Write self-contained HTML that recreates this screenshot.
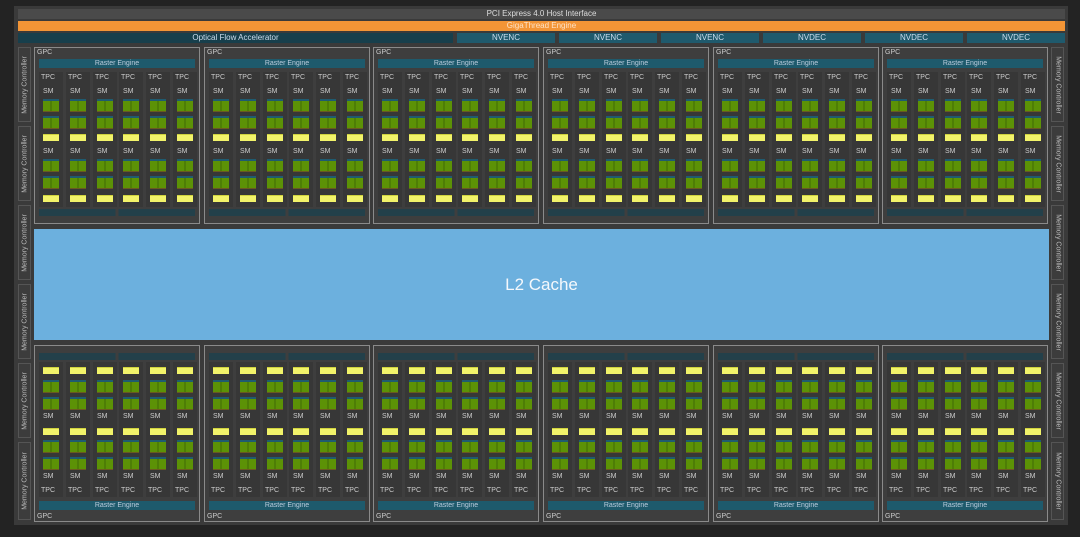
<!DOCTYPE html><html><head><meta charset="utf-8"><style>
*{margin:0;padding:0;box-sizing:border-box}
body{width:1080px;height:537px;background:#232323;position:relative;overflow:hidden;font-family:"Liberation Sans Narrow","Liberation Sans",sans-serif;color:#d8d8d8}
.a{position:absolute}
#panel{left:14px;top:6px;width:1054px;height:519px;background:#3a3a3a}
.bar{position:absolute;height:10px;font-size:8px;line-height:10px;text-align:center}
.mc{position:absolute;width:13px;height:75px;background:#3c3c3c;border:1px solid #555;font-size:7px;color:#bbb}
.mc span{position:absolute;left:50%;top:50%;white-space:nowrap;transform:translate(-50%,-50%) rotate(-90deg)}
.mc.r span{transform:translate(-50%,-50%) rotate(90deg)}
.g{position:absolute;width:166px;height:177px;background:#3e3e3e;border:1px solid #8a8a8a}
.g .lb{position:absolute;left:2px;font-size:7px;color:#ccc}
.g .re{position:absolute;left:4px;width:156px;height:9px;background:#1e5a6c;font-size:7px;line-height:9px;text-align:center;color:#bcd}
.g .bb{position:absolute;left:4px;width:156px;height:7px;background:linear-gradient(90deg,#23404a 0 49%,#3e3e3e 49% 51%,#23404a 51%)}
.top .lb{top:1px}.top .re{top:11px}.top .row{top:24px}.top .bb{top:161px}
.bot .lb{bottom:1px}.bot .re{bottom:11px}.bot .row{bottom:24px}.bot .bb{bottom:161px}
.row{position:absolute;left:0;width:164px;height:135px}
.t{position:absolute;width:24px;height:135px;background:#373737}
.t:nth-child(1){left:4px}.t:nth-child(2){left:31px}.t:nth-child(3){left:58px}.t:nth-child(4){left:84px}.t:nth-child(5){left:111px}.t:nth-child(6){left:138px}
.t p{position:absolute;left:2px;font-size:7px;line-height:8px;color:#ccc}
.t s{position:absolute;left:4px;width:16px;height:13px;background:linear-gradient(90deg,#5c9206 0 48%,#3f6a06 48% 54%,#5c9206 54%);border-top:2px solid #1f5b70;border-bottom:1px solid #6a5a20}
.t u{position:absolute;left:4px;width:16px;height:7px;background:#f2f36a;border-top:1px solid #cfd23e}
.top .l1{top:2px}.top .l2{top:16px;left:4px}.top .g1{top:27px}.top .g2{top:44px}.top .y1{top:62px}.top .l3{top:76px;left:4px}.top .g3{top:87px}.top .g4{top:104px}.top .y2{top:123px}
.bot .l1{bottom:2px}.bot .l2{bottom:16px;left:4px}.bot .g1{bottom:27px}.bot .g2{bottom:44px}.bot .y1{bottom:62px}.bot .l3{bottom:76px;left:4px}.bot .g3{bottom:87px}.bot .g4{bottom:104px}.bot .y2{bottom:123px}
#l2{left:34px;top:229px;width:1015px;height:111px;background:#6cb0de;font-family:"Liberation Sans",sans-serif;font-size:17px;color:#f4f8fc;text-align:center;line-height:111px}
</style></head><body>
<div id="panel" class="a"></div>
<div class="bar" style="left:18px;top:9px;width:1047px;background:#4a4a4a;color:#ddd">PCI Express 4.0 Host Interface</div>
<div class="bar" style="left:18px;top:21px;width:1047px;background:#f39536;color:#fde3c8">GigaThread Engine</div>
<div class="bar" style="left:18px;top:33px;width:435px;background:#173f4c;color:#cde">Optical Flow Accelerator</div>
<div class="bar" style="left:457px;top:33px;width:98px;background:#1f5a6d;color:#cde">NVENC</div>
<div class="bar" style="left:559px;top:33px;width:98px;background:#1f5a6d;color:#cde">NVENC</div>
<div class="bar" style="left:661px;top:33px;width:98px;background:#1f5a6d;color:#cde">NVENC</div>
<div class="bar" style="left:763px;top:33px;width:98px;background:#1f5a6d;color:#cde">NVDEC</div>
<div class="bar" style="left:865px;top:33px;width:98px;background:#1f5a6d;color:#cde">NVDEC</div>
<div class="bar" style="left:967px;top:33px;width:98px;background:#1f5a6d;color:#cde">NVDEC</div>

<div class="mc" style="left:18px;top:47px"><span>Memory Controller</span></div>
<div class="mc" style="left:18px;top:126px"><span>Memory Controller</span></div>
<div class="mc" style="left:18px;top:205px"><span>Memory Controller</span></div>
<div class="mc" style="left:18px;top:284px"><span>Memory Controller</span></div>
<div class="mc" style="left:18px;top:363px"><span>Memory Controller</span></div>
<div class="mc" style="left:18px;top:442px;height:78px"><span>Memory Controller</span></div>
<div class="mc r" style="left:1051px;top:47px"><span>Memory Controller</span></div>
<div class="mc r" style="left:1051px;top:126px"><span>Memory Controller</span></div>
<div class="mc r" style="left:1051px;top:205px"><span>Memory Controller</span></div>
<div class="mc r" style="left:1051px;top:284px"><span>Memory Controller</span></div>
<div class="mc r" style="left:1051px;top:363px"><span>Memory Controller</span></div>
<div class="mc r" style="left:1051px;top:442px;height:78px"><span>Memory Controller</span></div>

<div id="l2" class="a">L2 Cache</div>

<div class="g top" style="left:34px;top:47px"><div class="lb">GPC</div><div class="re">Raster Engine</div><div class="row">
<div class="t"><p class="l1">TPC</p><p class="l2">SM</p><s class="g1"></s><s class="g2"></s><u class="y1"></u><p class="l3">SM</p><s class="g3"></s><s class="g4"></s><u class="y2"></u></div>
<div class="t"><p class="l1">TPC</p><p class="l2">SM</p><s class="g1"></s><s class="g2"></s><u class="y1"></u><p class="l3">SM</p><s class="g3"></s><s class="g4"></s><u class="y2"></u></div>
<div class="t"><p class="l1">TPC</p><p class="l2">SM</p><s class="g1"></s><s class="g2"></s><u class="y1"></u><p class="l3">SM</p><s class="g3"></s><s class="g4"></s><u class="y2"></u></div>
<div class="t"><p class="l1">TPC</p><p class="l2">SM</p><s class="g1"></s><s class="g2"></s><u class="y1"></u><p class="l3">SM</p><s class="g3"></s><s class="g4"></s><u class="y2"></u></div>
<div class="t"><p class="l1">TPC</p><p class="l2">SM</p><s class="g1"></s><s class="g2"></s><u class="y1"></u><p class="l3">SM</p><s class="g3"></s><s class="g4"></s><u class="y2"></u></div>
<div class="t"><p class="l1">TPC</p><p class="l2">SM</p><s class="g1"></s><s class="g2"></s><u class="y1"></u><p class="l3">SM</p><s class="g3"></s><s class="g4"></s><u class="y2"></u></div>
</div><div class="bb"></div></div>

<div class="g top" style="left:204px;top:47px"><div class="lb">GPC</div><div class="re">Raster Engine</div><div class="row">
<div class="t"><p class="l1">TPC</p><p class="l2">SM</p><s class="g1"></s><s class="g2"></s><u class="y1"></u><p class="l3">SM</p><s class="g3"></s><s class="g4"></s><u class="y2"></u></div>
<div class="t"><p class="l1">TPC</p><p class="l2">SM</p><s class="g1"></s><s class="g2"></s><u class="y1"></u><p class="l3">SM</p><s class="g3"></s><s class="g4"></s><u class="y2"></u></div>
<div class="t"><p class="l1">TPC</p><p class="l2">SM</p><s class="g1"></s><s class="g2"></s><u class="y1"></u><p class="l3">SM</p><s class="g3"></s><s class="g4"></s><u class="y2"></u></div>
<div class="t"><p class="l1">TPC</p><p class="l2">SM</p><s class="g1"></s><s class="g2"></s><u class="y1"></u><p class="l3">SM</p><s class="g3"></s><s class="g4"></s><u class="y2"></u></div>
<div class="t"><p class="l1">TPC</p><p class="l2">SM</p><s class="g1"></s><s class="g2"></s><u class="y1"></u><p class="l3">SM</p><s class="g3"></s><s class="g4"></s><u class="y2"></u></div>
<div class="t"><p class="l1">TPC</p><p class="l2">SM</p><s class="g1"></s><s class="g2"></s><u class="y1"></u><p class="l3">SM</p><s class="g3"></s><s class="g4"></s><u class="y2"></u></div>
</div><div class="bb"></div></div>

<div class="g top" style="left:373px;top:47px"><div class="lb">GPC</div><div class="re">Raster Engine</div><div class="row">
<div class="t"><p class="l1">TPC</p><p class="l2">SM</p><s class="g1"></s><s class="g2"></s><u class="y1"></u><p class="l3">SM</p><s class="g3"></s><s class="g4"></s><u class="y2"></u></div>
<div class="t"><p class="l1">TPC</p><p class="l2">SM</p><s class="g1"></s><s class="g2"></s><u class="y1"></u><p class="l3">SM</p><s class="g3"></s><s class="g4"></s><u class="y2"></u></div>
<div class="t"><p class="l1">TPC</p><p class="l2">SM</p><s class="g1"></s><s class="g2"></s><u class="y1"></u><p class="l3">SM</p><s class="g3"></s><s class="g4"></s><u class="y2"></u></div>
<div class="t"><p class="l1">TPC</p><p class="l2">SM</p><s class="g1"></s><s class="g2"></s><u class="y1"></u><p class="l3">SM</p><s class="g3"></s><s class="g4"></s><u class="y2"></u></div>
<div class="t"><p class="l1">TPC</p><p class="l2">SM</p><s class="g1"></s><s class="g2"></s><u class="y1"></u><p class="l3">SM</p><s class="g3"></s><s class="g4"></s><u class="y2"></u></div>
<div class="t"><p class="l1">TPC</p><p class="l2">SM</p><s class="g1"></s><s class="g2"></s><u class="y1"></u><p class="l3">SM</p><s class="g3"></s><s class="g4"></s><u class="y2"></u></div>
</div><div class="bb"></div></div>

<div class="g top" style="left:543px;top:47px"><div class="lb">GPC</div><div class="re">Raster Engine</div><div class="row">
<div class="t"><p class="l1">TPC</p><p class="l2">SM</p><s class="g1"></s><s class="g2"></s><u class="y1"></u><p class="l3">SM</p><s class="g3"></s><s class="g4"></s><u class="y2"></u></div>
<div class="t"><p class="l1">TPC</p><p class="l2">SM</p><s class="g1"></s><s class="g2"></s><u class="y1"></u><p class="l3">SM</p><s class="g3"></s><s class="g4"></s><u class="y2"></u></div>
<div class="t"><p class="l1">TPC</p><p class="l2">SM</p><s class="g1"></s><s class="g2"></s><u class="y1"></u><p class="l3">SM</p><s class="g3"></s><s class="g4"></s><u class="y2"></u></div>
<div class="t"><p class="l1">TPC</p><p class="l2">SM</p><s class="g1"></s><s class="g2"></s><u class="y1"></u><p class="l3">SM</p><s class="g3"></s><s class="g4"></s><u class="y2"></u></div>
<div class="t"><p class="l1">TPC</p><p class="l2">SM</p><s class="g1"></s><s class="g2"></s><u class="y1"></u><p class="l3">SM</p><s class="g3"></s><s class="g4"></s><u class="y2"></u></div>
<div class="t"><p class="l1">TPC</p><p class="l2">SM</p><s class="g1"></s><s class="g2"></s><u class="y1"></u><p class="l3">SM</p><s class="g3"></s><s class="g4"></s><u class="y2"></u></div>
</div><div class="bb"></div></div>

<div class="g top" style="left:713px;top:47px"><div class="lb">GPC</div><div class="re">Raster Engine</div><div class="row">
<div class="t"><p class="l1">TPC</p><p class="l2">SM</p><s class="g1"></s><s class="g2"></s><u class="y1"></u><p class="l3">SM</p><s class="g3"></s><s class="g4"></s><u class="y2"></u></div>
<div class="t"><p class="l1">TPC</p><p class="l2">SM</p><s class="g1"></s><s class="g2"></s><u class="y1"></u><p class="l3">SM</p><s class="g3"></s><s class="g4"></s><u class="y2"></u></div>
<div class="t"><p class="l1">TPC</p><p class="l2">SM</p><s class="g1"></s><s class="g2"></s><u class="y1"></u><p class="l3">SM</p><s class="g3"></s><s class="g4"></s><u class="y2"></u></div>
<div class="t"><p class="l1">TPC</p><p class="l2">SM</p><s class="g1"></s><s class="g2"></s><u class="y1"></u><p class="l3">SM</p><s class="g3"></s><s class="g4"></s><u class="y2"></u></div>
<div class="t"><p class="l1">TPC</p><p class="l2">SM</p><s class="g1"></s><s class="g2"></s><u class="y1"></u><p class="l3">SM</p><s class="g3"></s><s class="g4"></s><u class="y2"></u></div>
<div class="t"><p class="l1">TPC</p><p class="l2">SM</p><s class="g1"></s><s class="g2"></s><u class="y1"></u><p class="l3">SM</p><s class="g3"></s><s class="g4"></s><u class="y2"></u></div>
</div><div class="bb"></div></div>

<div class="g top" style="left:882px;top:47px"><div class="lb">GPC</div><div class="re">Raster Engine</div><div class="row">
<div class="t"><p class="l1">TPC</p><p class="l2">SM</p><s class="g1"></s><s class="g2"></s><u class="y1"></u><p class="l3">SM</p><s class="g3"></s><s class="g4"></s><u class="y2"></u></div>
<div class="t"><p class="l1">TPC</p><p class="l2">SM</p><s class="g1"></s><s class="g2"></s><u class="y1"></u><p class="l3">SM</p><s class="g3"></s><s class="g4"></s><u class="y2"></u></div>
<div class="t"><p class="l1">TPC</p><p class="l2">SM</p><s class="g1"></s><s class="g2"></s><u class="y1"></u><p class="l3">SM</p><s class="g3"></s><s class="g4"></s><u class="y2"></u></div>
<div class="t"><p class="l1">TPC</p><p class="l2">SM</p><s class="g1"></s><s class="g2"></s><u class="y1"></u><p class="l3">SM</p><s class="g3"></s><s class="g4"></s><u class="y2"></u></div>
<div class="t"><p class="l1">TPC</p><p class="l2">SM</p><s class="g1"></s><s class="g2"></s><u class="y1"></u><p class="l3">SM</p><s class="g3"></s><s class="g4"></s><u class="y2"></u></div>
<div class="t"><p class="l1">TPC</p><p class="l2">SM</p><s class="g1"></s><s class="g2"></s><u class="y1"></u><p class="l3">SM</p><s class="g3"></s><s class="g4"></s><u class="y2"></u></div>
</div><div class="bb"></div></div>

<div class="g bot" style="left:34px;top:345px"><div class="lb">GPC</div><div class="re">Raster Engine</div><div class="row">
<div class="t"><p class="l1">TPC</p><p class="l2">SM</p><s class="g1"></s><s class="g2"></s><u class="y1"></u><p class="l3">SM</p><s class="g3"></s><s class="g4"></s><u class="y2"></u></div>
<div class="t"><p class="l1">TPC</p><p class="l2">SM</p><s class="g1"></s><s class="g2"></s><u class="y1"></u><p class="l3">SM</p><s class="g3"></s><s class="g4"></s><u class="y2"></u></div>
<div class="t"><p class="l1">TPC</p><p class="l2">SM</p><s class="g1"></s><s class="g2"></s><u class="y1"></u><p class="l3">SM</p><s class="g3"></s><s class="g4"></s><u class="y2"></u></div>
<div class="t"><p class="l1">TPC</p><p class="l2">SM</p><s class="g1"></s><s class="g2"></s><u class="y1"></u><p class="l3">SM</p><s class="g3"></s><s class="g4"></s><u class="y2"></u></div>
<div class="t"><p class="l1">TPC</p><p class="l2">SM</p><s class="g1"></s><s class="g2"></s><u class="y1"></u><p class="l3">SM</p><s class="g3"></s><s class="g4"></s><u class="y2"></u></div>
<div class="t"><p class="l1">TPC</p><p class="l2">SM</p><s class="g1"></s><s class="g2"></s><u class="y1"></u><p class="l3">SM</p><s class="g3"></s><s class="g4"></s><u class="y2"></u></div>
</div><div class="bb"></div></div>

<div class="g bot" style="left:204px;top:345px"><div class="lb">GPC</div><div class="re">Raster Engine</div><div class="row">
<div class="t"><p class="l1">TPC</p><p class="l2">SM</p><s class="g1"></s><s class="g2"></s><u class="y1"></u><p class="l3">SM</p><s class="g3"></s><s class="g4"></s><u class="y2"></u></div>
<div class="t"><p class="l1">TPC</p><p class="l2">SM</p><s class="g1"></s><s class="g2"></s><u class="y1"></u><p class="l3">SM</p><s class="g3"></s><s class="g4"></s><u class="y2"></u></div>
<div class="t"><p class="l1">TPC</p><p class="l2">SM</p><s class="g1"></s><s class="g2"></s><u class="y1"></u><p class="l3">SM</p><s class="g3"></s><s class="g4"></s><u class="y2"></u></div>
<div class="t"><p class="l1">TPC</p><p class="l2">SM</p><s class="g1"></s><s class="g2"></s><u class="y1"></u><p class="l3">SM</p><s class="g3"></s><s class="g4"></s><u class="y2"></u></div>
<div class="t"><p class="l1">TPC</p><p class="l2">SM</p><s class="g1"></s><s class="g2"></s><u class="y1"></u><p class="l3">SM</p><s class="g3"></s><s class="g4"></s><u class="y2"></u></div>
<div class="t"><p class="l1">TPC</p><p class="l2">SM</p><s class="g1"></s><s class="g2"></s><u class="y1"></u><p class="l3">SM</p><s class="g3"></s><s class="g4"></s><u class="y2"></u></div>
</div><div class="bb"></div></div>

<div class="g bot" style="left:373px;top:345px"><div class="lb">GPC</div><div class="re">Raster Engine</div><div class="row">
<div class="t"><p class="l1">TPC</p><p class="l2">SM</p><s class="g1"></s><s class="g2"></s><u class="y1"></u><p class="l3">SM</p><s class="g3"></s><s class="g4"></s><u class="y2"></u></div>
<div class="t"><p class="l1">TPC</p><p class="l2">SM</p><s class="g1"></s><s class="g2"></s><u class="y1"></u><p class="l3">SM</p><s class="g3"></s><s class="g4"></s><u class="y2"></u></div>
<div class="t"><p class="l1">TPC</p><p class="l2">SM</p><s class="g1"></s><s class="g2"></s><u class="y1"></u><p class="l3">SM</p><s class="g3"></s><s class="g4"></s><u class="y2"></u></div>
<div class="t"><p class="l1">TPC</p><p class="l2">SM</p><s class="g1"></s><s class="g2"></s><u class="y1"></u><p class="l3">SM</p><s class="g3"></s><s class="g4"></s><u class="y2"></u></div>
<div class="t"><p class="l1">TPC</p><p class="l2">SM</p><s class="g1"></s><s class="g2"></s><u class="y1"></u><p class="l3">SM</p><s class="g3"></s><s class="g4"></s><u class="y2"></u></div>
<div class="t"><p class="l1">TPC</p><p class="l2">SM</p><s class="g1"></s><s class="g2"></s><u class="y1"></u><p class="l3">SM</p><s class="g3"></s><s class="g4"></s><u class="y2"></u></div>
</div><div class="bb"></div></div>

<div class="g bot" style="left:543px;top:345px"><div class="lb">GPC</div><div class="re">Raster Engine</div><div class="row">
<div class="t"><p class="l1">TPC</p><p class="l2">SM</p><s class="g1"></s><s class="g2"></s><u class="y1"></u><p class="l3">SM</p><s class="g3"></s><s class="g4"></s><u class="y2"></u></div>
<div class="t"><p class="l1">TPC</p><p class="l2">SM</p><s class="g1"></s><s class="g2"></s><u class="y1"></u><p class="l3">SM</p><s class="g3"></s><s class="g4"></s><u class="y2"></u></div>
<div class="t"><p class="l1">TPC</p><p class="l2">SM</p><s class="g1"></s><s class="g2"></s><u class="y1"></u><p class="l3">SM</p><s class="g3"></s><s class="g4"></s><u class="y2"></u></div>
<div class="t"><p class="l1">TPC</p><p class="l2">SM</p><s class="g1"></s><s class="g2"></s><u class="y1"></u><p class="l3">SM</p><s class="g3"></s><s class="g4"></s><u class="y2"></u></div>
<div class="t"><p class="l1">TPC</p><p class="l2">SM</p><s class="g1"></s><s class="g2"></s><u class="y1"></u><p class="l3">SM</p><s class="g3"></s><s class="g4"></s><u class="y2"></u></div>
<div class="t"><p class="l1">TPC</p><p class="l2">SM</p><s class="g1"></s><s class="g2"></s><u class="y1"></u><p class="l3">SM</p><s class="g3"></s><s class="g4"></s><u class="y2"></u></div>
</div><div class="bb"></div></div>

<div class="g bot" style="left:713px;top:345px"><div class="lb">GPC</div><div class="re">Raster Engine</div><div class="row">
<div class="t"><p class="l1">TPC</p><p class="l2">SM</p><s class="g1"></s><s class="g2"></s><u class="y1"></u><p class="l3">SM</p><s class="g3"></s><s class="g4"></s><u class="y2"></u></div>
<div class="t"><p class="l1">TPC</p><p class="l2">SM</p><s class="g1"></s><s class="g2"></s><u class="y1"></u><p class="l3">SM</p><s class="g3"></s><s class="g4"></s><u class="y2"></u></div>
<div class="t"><p class="l1">TPC</p><p class="l2">SM</p><s class="g1"></s><s class="g2"></s><u class="y1"></u><p class="l3">SM</p><s class="g3"></s><s class="g4"></s><u class="y2"></u></div>
<div class="t"><p class="l1">TPC</p><p class="l2">SM</p><s class="g1"></s><s class="g2"></s><u class="y1"></u><p class="l3">SM</p><s class="g3"></s><s class="g4"></s><u class="y2"></u></div>
<div class="t"><p class="l1">TPC</p><p class="l2">SM</p><s class="g1"></s><s class="g2"></s><u class="y1"></u><p class="l3">SM</p><s class="g3"></s><s class="g4"></s><u class="y2"></u></div>
<div class="t"><p class="l1">TPC</p><p class="l2">SM</p><s class="g1"></s><s class="g2"></s><u class="y1"></u><p class="l3">SM</p><s class="g3"></s><s class="g4"></s><u class="y2"></u></div>
</div><div class="bb"></div></div>

<div class="g bot" style="left:882px;top:345px"><div class="lb">GPC</div><div class="re">Raster Engine</div><div class="row">
<div class="t"><p class="l1">TPC</p><p class="l2">SM</p><s class="g1"></s><s class="g2"></s><u class="y1"></u><p class="l3">SM</p><s class="g3"></s><s class="g4"></s><u class="y2"></u></div>
<div class="t"><p class="l1">TPC</p><p class="l2">SM</p><s class="g1"></s><s class="g2"></s><u class="y1"></u><p class="l3">SM</p><s class="g3"></s><s class="g4"></s><u class="y2"></u></div>
<div class="t"><p class="l1">TPC</p><p class="l2">SM</p><s class="g1"></s><s class="g2"></s><u class="y1"></u><p class="l3">SM</p><s class="g3"></s><s class="g4"></s><u class="y2"></u></div>
<div class="t"><p class="l1">TPC</p><p class="l2">SM</p><s class="g1"></s><s class="g2"></s><u class="y1"></u><p class="l3">SM</p><s class="g3"></s><s class="g4"></s><u class="y2"></u></div>
<div class="t"><p class="l1">TPC</p><p class="l2">SM</p><s class="g1"></s><s class="g2"></s><u class="y1"></u><p class="l3">SM</p><s class="g3"></s><s class="g4"></s><u class="y2"></u></div>
<div class="t"><p class="l1">TPC</p><p class="l2">SM</p><s class="g1"></s><s class="g2"></s><u class="y1"></u><p class="l3">SM</p><s class="g3"></s><s class="g4"></s><u class="y2"></u></div>
</div><div class="bb"></div></div>
</body></html>
